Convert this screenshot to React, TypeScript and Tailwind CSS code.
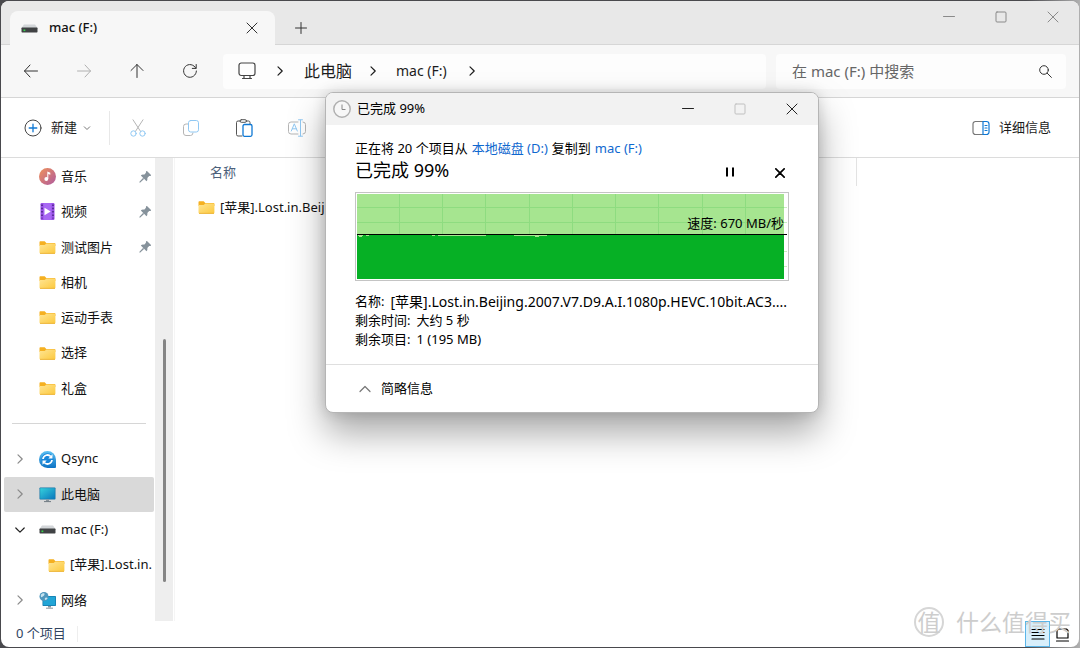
import { ReactNode } from "react";

const sidebarItems = [
  { name: "音乐", icon: "music", pinned: true },
  { name: "视频", icon: "video", pinned: true },
  { name: "测试图片", icon: "folder", pinned: true },
  { name: "相机", icon: "folder" },
  { name: "运动手表", icon: "folder" },
  { name: "选择", icon: "folder" },
  { name: "礼盒", icon: "folder" },
];

const treeItems = [
  { name: "Qsync", icon: "sync", chevron: "right" },
  { name: "此电脑", icon: "pc", chevron: "right", selected: true },
  { name: "mac (F:)", icon: "drive", chevron: "down" },
  { name: "[苹果].Lost.in.", icon: "folder", nested: true },
  { name: "网络", icon: "network", chevron: "right" },
];

type Item = {
  name: string;
  icon: string;
  pinned?: boolean;
  chevron?: string;
  selected?: boolean;
  nested?: boolean;
};

function Line({
  children,
  size = 16,
  box = 16,
  width = 1,
  className = "",
}: {
  children: ReactNode;
  size?: number;
  box?: number;
  width?: number;
  className?: string;
}) {
  return (
    <svg
      width={size}
      height={size}
      viewBox={`0 0 ${box} ${box}`}
      fill="none"
      stroke="currentColor"
      strokeWidth={width}
      strokeLinecap="round"
      strokeLinejoin="round"
      className={`shrink-0 ${className}`}
    >
      {children}
    </svg>
  );
}

function Chevron({ dir, className = "" }: { dir: string; className?: string }) {
  const paths: Record<string, string> = {
    right: "M4 1.8 8.2 6 4 10.2",
    down: "M1.8 4 6 8.2 10.2 4",
    up: "M1 8.5 6 3.5 11 8.5",
  };
  return (
    <Line size={12} box={12} width={1.2} className={className}>
      <path d={paths[dir]} />
    </Line>
  );
}

function Cross({ size = 12, width = 1 }: { size?: number; width?: number }) {
  return (
    <Line size={size} box={12} width={width}>
      <path d="M1 1l10 10M11 1L1 11" />
    </Line>
  );
}

function ItemIcon({ name }: { name: string }) {
  return (
    <svg width="17" height="17" viewBox="0 0 17 17" className="shrink-0">
      {name === "folder" && (
        <>
          <defs>
            <linearGradient id="folder" x1="0" y1="0" x2="1" y2="1">
              <stop offset="0" stopColor="#ffe594" />
              <stop offset="1" stopColor="#fcc93e" />
            </linearGradient>
          </defs>
          <path d="M.5 3.3c0-.6.4-1 1-1h4.2l1.6 1.6h8c.7 0 1.1.4 1.1 1V7H.5z" fill="#f5b021" />
          <path d="M.5 6h5.200l1.600-1.500h8.200c.6 0 .9.3.9.9v8.100c0 .6-.4.9-1 .9H1.500c-.6 0-1-.3-1-.9z" fill="url(#folder)" />
          <path d="M1 14.400h15" stroke="#e9a91f" strokeWidth=".8" />
        </>
      )}
      {name === "music" && (
        <>
          <defs>
            <linearGradient id="music" x1="0" y1="0" x2="1" y2="1">
              <stop offset="0" stopColor="#f0925a" />
              <stop offset="1" stopColor="#ae5a9f" />
            </linearGradient>
          </defs>
          <circle cx="8.500" cy="8.500" r="8.500" fill="url(#music)" />
          <circle cx="7.300" cy="11" r="1.900" fill="#fff" />
          <path d="M8.300 11V3.600l3 1.200v2l-2-.7V11z" fill="#fff" />
        </>
      )}
      {name === "video" && (
        <>
          <rect x="1.500" y="0" width="14" height="17" rx="1.200" fill="#9a50e8" />
          <rect x="4.500" y="0" width="8" height="17" fill="#a868f3" />
          <path d="M3 1.500v14M14 1.500v14" stroke="#42207c" strokeWidth="1.400" strokeDasharray="1.500 1.800" />
          <path d="M5.500 4.800v7.400l6.200-3.700z" fill="#fff" />
        </>
      )}
      {name === "sync" && (
        <>
          <defs>
            <linearGradient id="sync" x1="0" y1="0" x2="0" y2="1">
              <stop offset="0" stopColor="#5cc1f3" />
              <stop offset="1" stopColor="#0d73c4" />
            </linearGradient>
          </defs>
          <path d="M8.500 0a8.500 8.500 0 0 1 8.500 8.500V16a1 1 0 0 1-1 1H8.500a8.500 8.500 0 0 1 0-17z" fill="url(#sync)" />
          <circle cx="8.500" cy="8.300" r="6" fill="#1786da" />
          <path d="M4 8a4.500 4.500 0 0 1 7.800-2.500M13 9a4.500 4.500 0 0 1-7.800 2.500" fill="none" stroke="#fff" strokeWidth="1.800" />
          <path d="M13.500 3.300v4.200H9.300zM3.500 13.700V9.500h4.200z" fill="#fff" />
        </>
      )}
      {name === "pc" && (
        <>
          <defs>
            <linearGradient id="pc" x1="0" y1="0" x2="1" y2="1">
              <stop offset="0" stopColor="#35d0dc" />
              <stop offset="1" stopColor="#0a78bd" />
            </linearGradient>
          </defs>
          <rect x=".5" y="1.500" width="16" height="12" rx=".8" fill="#1477a8" />
          <rect x="1.200" y="2.200" width="14.600" height="10.600" fill="url(#pc)" />
          <path d="M7 13.500h3v1.800H7z" fill="#8b949b" />
          <path d="M5 15.600h7" stroke="#707a82" strokeWidth="1" />
        </>
      )}
      {name === "drive" && (
        <>
          <path d="M3 4.500h11l2.500 3.500H.5z" fill="#d3d6d9" />
          <rect x=".5" y="7.500" width="16" height="5" rx=".7" fill="#404244" />
          <rect x="2.500" y="9.500" width="1.800" height="1.600" fill="#35d64a" />
        </>
      )}
      {name === "network" && (
        <>
          <rect x="3.500" y="4" width="13.500" height="10" rx=".8" fill="#1477a8" />
          <rect x="4.200" y="4.700" width="12.100" height="8.600" fill="#22a5d6" />
          <path d="M9 14h3v1.500H9z" fill="#8b949b" />
          <path d="M7 16.200h7" stroke="#8b949b" />
          <circle cx="5" cy="4.500" r="4.500" fill="#4f97bd" />
          <path d="M2 2.500c2-2 4-1.500 3.500 0S4 4 3 5 1.500 4 2 2.500M6 6c1-1 2-.5 2.500 0S7 8 6.500 8 5.500 7 6 6" fill="#c5e3ef" />
        </>
      )}
    </svg>
  );
}

function Pin() {
  return (
    <svg width="12" height="12" viewBox="0 0 12 12" className="ml-auto mr-[3px] shrink-0" fill="#86929b">
      <path d="M7.300.2c.3-.3.6-.3.900 0l3.600 3.600c.3.3.3.6 0 .9-.5.5-1.100.5-1.600.3L8.300 6.900c.3 1.300.1 2.400-.8 3.300L4.800 7.500.900 11.400.3 11.700l.3-.6 3.900-3.900-2.700-2.700c.9-.9 2-1.100 3.300-.8L7 1.800C6.800 1.300 6.800.7 7.300.2z" />
      <path d="M4 7l1 1-3.800 3.500-.7-.7z" />
    </svg>
  );
}

function SidebarRow({ item }: { item: Item }) {
  return (
    <li className="flex min-h-[35px] flex-1">
      <button
        type="button"
        className={`flex w-full items-center whitespace-nowrap rounded-xs pl-[10px] text-left ${
          item.selected ? "bg-[#d9d9d9]" : ""
        }`}
      >
        <span className="w-3 shrink-0">
          {item.chevron && (
            <Chevron
              dir={item.chevron}
              className={item.chevron === "down" ? "text-[#222]" : "text-[#8a8a8a]"}
            />
          )}
        </span>
        <span className={`mr-[5px] shrink-0 ${item.nested ? "ml-[22px]" : "ml-[13px]"}`}>
          <ItemIcon name={item.icon} />
        </span>
        <span>{item.name}</span>
        {item.pinned && <Pin />}
      </button>
    </li>
  );
}

function TitleBar() {
  return (
    <header className="flex h-11 shrink-0 items-stretch border-b border-[#d6d6d6] bg-[#e8e8e8]">
      <div className="-mb-px ml-[9px] mt-[10px] flex w-[265px] items-center rounded-t-lg bg-[#f7f7f7] pl-[11px] pr-[17px]">
        <ItemIcon name="drive" />
        <span className="ml-[11px] flex-1 font-medium">mac (F:)</span>
        <button type="button" aria-label="关闭标签页" className="text-[#333]">
          <Cross />
        </button>
      </div>
      <button type="button" aria-label="新建标签页" className="ml-5 mt-[10px] text-[#333]">
        <Line size={12} box={12}>
          <path d="M6 .5v11M.5 6h11" />
        </Line>
      </button>
      <div className="ml-auto flex h-8 text-[#8a8a8a]">
        <button type="button" aria-label="最小化" className="flex w-[52px] items-center justify-center">
          <Line size={12} box={12}>
            <path d="M.5 5.500h11" />
          </Line>
        </button>
        <button type="button" aria-label="最大化" className="flex w-[52px] items-center justify-center">
          <Line size={12} box={12}>
            <rect x="1" y="1" width="10" height="10" rx="1" />
          </Line>
        </button>
        <button type="button" aria-label="关闭" className="flex w-[52px] items-center justify-center">
          <Cross />
        </button>
      </div>
    </header>
  );
}

function NavBar() {
  const navButton = "flex w-[53px] items-center justify-center";
  return (
    <nav className="flex h-[53px] shrink-0 items-center border-b border-[#d6d6d6] bg-[#f7f7f7] pl-[3px] pr-[13px] text-[#333]">
      <button type="button" aria-label="后退" className={navButton}>
        <Line>
          <path d="M7 2L1.500 8 7 14M1.500 8h13" />
        </Line>
      </button>
      <button type="button" aria-label="前进" disabled className={`${navButton} text-[#b0b0b0]`}>
        <Line>
          <path d="M9 2l5.500 6L9 14M14.500 8h-13" />
        </Line>
      </button>
      <button type="button" aria-label="向上" className={navButton}>
        <Line>
          <path d="M2 7.500L8 1.500l6 6M8 1.500v13" />
        </Line>
      </button>
      <button type="button" aria-label="刷新" className={navButton}>
        <Line>
          <path d="M13.800 5.200A6.400 6.400 0 1 0 14.400 8M14.200 1.500v3.900h-3.900" />
        </Line>
      </button>
      <div className="ml-[7px] flex h-[35px] flex-1 items-center rounded-sm bg-[#fdfdfd] pl-[15px] text-base whitespace-nowrap text-[#1c1c1c]">
        <Line size={18} box={18} width={1.2} className="text-[#444]">
          <rect x="1" y="1" width="16" height="12.500" rx="2.200" />
          <path d="M6 13.500v2.500M12 13.500v2.500M4.500 16.500h9" />
        </Line>
        <Chevron dir="right" className="ml-[18px]" />
        <button type="button" className="ml-[18px]">
          此电脑
        </button>
        <Chevron dir="right" className="ml-[15px]" />
        <button type="button" className="ml-[17px] text-sm">
          mac (F:)
        </button>
        <Chevron dir="right" className="ml-[19px]" />
      </div>
      <label className="ml-[10px] flex h-[35px] w-[290px] items-center rounded-sm bg-[#fdfdfd] pl-4 pr-[14px]">
        <input
          type="text"
          aria-label="在 mac (F:) 中搜索"
          placeholder="在 mac (F:) 中搜索"
          className="min-w-0 flex-1 bg-transparent text-[15px] outline-none placeholder:text-[#666]"
        />
        <Line size={13} box={13}>
          <circle cx="5" cy="5" r="4.300" />
          <path d="M8.200 8.200l4.200 4.200" />
        </Line>
      </label>
    </nav>
  );
}

function CommandBar() {
  const toolButton = "flex w-[53px] items-center justify-center";
  return (
    <div className="flex h-[60px] shrink-0 items-center border-b border-[#dcdcdc] bg-white pl-[23px] pr-7 text-[#1c1c1c]">
      <button type="button" className="flex items-center">
        <Line size={18} box={18} className="text-[#444]">
          <circle cx="9" cy="9" r="8" />
          <path d="M9 5.200v7.600M5.200 9h7.600" stroke="#0f78d4" strokeWidth="1.300" />
        </Line>
        <span className="ml-[9px]">新建</span>
        <svg width="8" height="8" viewBox="0 0 8 8" fill="none" stroke="#777" className="ml-[6px]">
          <path d="M1 2.500l3 3 3-3" />
        </svg>
      </button>
      <div className="ml-[18px] h-[34px] w-px bg-[#e8e8e8]" />
      <button type="button" aria-label="剪切" disabled className={`${toolButton} ml-px`}>
        <Line size={18} box={18} className="text-[#b5b5b5]">
          <path d="M4 .8l7.500 11.500M14 .8L6.500 12.300" />
          <circle cx="4.500" cy="14.500" r="2.700" stroke="#90c8f3" />
          <circle cx="13.500" cy="14.500" r="2.700" stroke="#90c8f3" />
        </Line>
      </button>
      <button type="button" aria-label="复制" disabled className={toolButton}>
        <Line size={18} box={18} className="text-[#b5b5b5]">
          <path d="M6 5H4a2.500 2.500 0 0 0-2.500 2.500v6.500A2.500 2.500 0 0 0 4 16.500h4.500A2.500 2.500 0 0 0 11 14" />
          <rect x="6.500" y="1.500" width="10" height="11.500" rx="2.200" stroke="#90c8f3" />
        </Line>
      </button>
      <button type="button" aria-label="粘贴" className={toolButton}>
        <Line size={18} box={18} className="text-[#555]">
          <path d="M5.500 2H3a1.500 1.500 0 0 0-1.500 1.500v12A1.500 1.500 0 0 0 3 17h4M11 2h2.500A1.500 1.500 0 0 1 15 3.500V5" />
          <rect x="5" y=".7" width="6.500" height="2.600" rx="1.300" />
          <rect x="8" y="5.500" width="9" height="11.800" rx="1.500" stroke="#0f78d4" strokeWidth="1.300" />
        </Line>
      </button>
      <button type="button" aria-label="重命名" disabled className={toolButton}>
        <Line size={18} box={18} className="text-[#b5b5b5]">
          <path d="M10 3H3A2.500 2.500 0 0 0 .5 5.500v7A2.500 2.500 0 0 0 3 15h7M15 3a2.500 2.500 0 0 1 2.500 2.500v7A2.500 2.500 0 0 1 15 15" />
          <path d="M12.500 1v16M10.500 .8h4M10.500 17.200h4M3.300 12l3-7.200 3 7.200M4.400 9.800h3.900" stroke="#90c8f3" />
        </Line>
      </button>
      <button type="button" className="ml-auto flex items-center">
        <Line size={18} box={18} width={1.2} className="text-[#777]">
          <path d="M11 2.500H3.500A2.500 2.500 0 0 0 1 5v8a2.500 2.500 0 0 0 2.500 2.500H11" />
          <path d="M11 2.500h3.500A2.500 2.500 0 0 1 17 5v8a2.500 2.500 0 0 1-2.500 2.500H11zM13 6.500h2M13 9h2M13 11.500h2" stroke="#0f78d4" />
        </Line>
        <span className="ml-[9px]">详细信息</span>
      </button>
    </div>
  );
}

function Sidebar() {
  return (
    <aside className="flex w-[173px] shrink-0">
      <div className="flex w-[153px] flex-col pb-[3px] pl-[3px] pt-px">
        <ul className="flex flex-[7] flex-col">
          {sidebarItems.map((item) => (
            <SidebarRow key={item.name} item={item} />
          ))}
        </ul>
        <div className="flex min-h-[35px] flex-1 items-center pl-2 pr-2">
          <hr className="w-full border-[#d6d6d6]" />
        </div>
        <ul className="flex flex-[5] flex-col">
          {treeItems.map((item) => (
            <SidebarRow key={item.name} item={item} />
          ))}
        </ul>
      </div>
      <div className="ml-px flex w-[18px] flex-col items-center bg-[#eeeeee]">
        <div className="flex-[181]" />
        <div className="w-[3px] flex-[243] rounded-full bg-[#858585]" />
        <div className="flex-[39]" />
      </div>
    </aside>
  );
}

function SpeedChart() {
  const columns = [43, 86, 129, 173, 216, 259, 302, 346, 389];
  const rows = [14, 29, 58, 73];
  return (
    <div className="relative mt-[10px] h-[89px] border border-[#c4c4c4] bg-white">
      <svg
        width="100%"
        height="100%"
        viewBox="0 0 432 87"
        preserveAspectRatio="none"
        shapeRendering="crispEdges"
        className="block"
      >
        {rows.map((y) => (
          <rect key={y} x="428" y={y} width="3" height="1" fill="#c9efc0" />
        ))}
        <rect x="1" y="1" width="427" height="85" fill="#a6e590" />
        {columns.map((x) => (
          <rect key={x} x={x} y="1" width="1" height="41" fill="#8edc80" />
        ))}
        <rect x="1" y="14" width="427" height="1" fill="#8edc80" />
        <rect x="1" y="29" width="427" height="1" fill="#8edc80" />
        <rect x="1" y="41" width="427" height="45" fill="#06b025" />
        <path d="M2 42.500h5M10 42.500h3M76 42.500h3M82 42.500h48M158 42.500h33" stroke="#a6e590" />
        <path d="M3 43.500h3M179 43.500h4" stroke="#a6e590" />
        <rect x="1" y="41" width="430" height="1" fill="#000" />
      </svg>
      <span className="absolute right-1 top-5 leading-5">速度: 670 MB/秒</span>
    </div>
  );
}

function CopyDialog() {
  return (
    <section
      role="dialog"
      aria-label="已完成 99%"
      className="absolute left-[325px] top-[92px] w-[494px] overflow-hidden rounded-lg border border-[#b5b5b5] bg-white text-black shadow-[0_20px_36px_rgba(0,0,0,0.34),0_0_14px_rgba(0,0,0,0.14)]"
    >
      <div className="flex h-8 items-center bg-[#f2f2f2] pl-[7px]">
        <svg width="18" height="18" viewBox="0 0 18 18" fill="none" stroke="#b0b0b0">
          <circle cx="9" cy="9" r="8.200" fill="#f7f7f7" strokeWidth="1.500" />
          <path d="M9 4.500V9.500h3.500" stroke="#888" />
        </svg>
        <span className="ml-[6px]">已完成 99%</span>
        <div className="ml-auto flex text-[#222]">
          <button type="button" aria-label="最小化" className="flex w-[52px] items-center justify-center">
            <Line size={12} box={12}>
              <path d="M.5 5.500h11" />
            </Line>
          </button>
          <button
            type="button"
            aria-label="最大化"
            disabled
            className="flex w-[52px] items-center justify-center text-[#c0c0c0]"
          >
            <Line size={12} box={12}>
              <rect x="1" y="1" width="10" height="10" rx="1" />
            </Line>
          </button>
          <button type="button" aria-label="关闭" className="flex w-[52px] items-center justify-center">
            <Cross />
          </button>
        </div>
      </div>

      <div className="px-[29px] pt-[13px]">
        <p className="flex gap-1 leading-5">
          正在将 20 个项目从
          <a href="#d" className="text-[#0f68cf]">
            本地磁盘 (D:)
          </a>
          复制到
          <a href="#f" className="text-[#0f68cf]">
            mac (F:)
          </a>
        </p>
        <div className="flex h-6 items-center pr-[4px]">
          <h1 className="text-lg leading-6">已完成 99%</h1>
          <button type="button" aria-label="暂停" className="ml-auto mt-1 p-1">
            <Line size={12} box={12} width={2} className="[stroke-linecap:butt]">
              <path d="M3 1.500v9M9 1.500v9" />
            </Line>
          </button>
          <button type="button" aria-label="取消" className="ml-[35px] mt-[5px]">
            <Cross size={10} width={2} />
          </button>
        </div>
        <SpeedChart />
        <div className="mt-[11px] leading-[19px]">
          <p className="flex gap-[6px] whitespace-nowrap">
            名称:
            <span className="text-sm leading-[19px]">
              [苹果].Lost.in.Beijing.2007.V7.D9.A.I.1080p.HEVC.10bit.AC3....
            </span>
          </p>
          <p className="flex gap-[6px]">
            剩余时间:
            <span>大约 5 秒</span>
          </p>
          <p className="flex gap-[6px]">
            剩余项目:
            <span>1 (195 MB)</span>
          </p>
        </div>
      </div>

      <div className="mt-[15px] flex h-12 items-center border-t border-[#dfdfdf] pl-[33px]">
        <button type="button" className="flex items-center">
          <Chevron dir="up" className="text-[#777]" />
          <span className="ml-[10px]">简略信息</span>
        </button>
      </div>
    </section>
  );
}

function Watermark() {
  return (
    <div className="pointer-events-none absolute bottom-[8px] right-[9px] flex items-center text-[23px] leading-9 text-[#cdcdcd]">
      <span className="mr-3 flex size-[30px] items-center justify-center rounded-full border-2 border-[#d6d6d6]">
        值
      </span>
      什么值得买
    </div>
  );
}

export default function App() {
  return (
    <div className="relative flex min-h-screen flex-col bg-linear-to-r from-[#49494d] from-95% to-[#b0b0b0] p-px font-['Noto_Sans','Noto_Sans_CJK_SC',sans-serif] text-[13px] text-[#111]">
      <div className="flex flex-1 flex-col overflow-hidden rounded-lg bg-white">
        <TitleBar />
        <NavBar />
        <CommandBar />
        <div className="flex flex-1">
          <Sidebar />
          <main className="flex-1 border-l border-[#f5f5f5]">
            <div className="flex h-7 items-center text-[#4c607a]">
              <span className="h-full w-[682px] border-r border-[#e3e3e3] pl-[35px] leading-7">名称</span>
            </div>
            <div className="mt-1 flex h-[35px] items-center whitespace-nowrap pl-[23px]">
              <ItemIcon name="folder" />
              <span className="ml-[5px]">[苹果].Lost.in.Beijing.2007</span>
            </div>
          </main>
        </div>
        <footer className="flex h-[26px] shrink-0 items-center pl-[15px] text-[#30445f]">
          <span>0 个项目</span>
          <div className="ml-[11px] h-4 w-px bg-[#eeeeee]" />
          <div className="ml-auto flex h-full items-center pr-[9px] text-black">
            <button
              type="button"
              aria-label="详细信息视图"
              className="flex h-full w-[25px] items-center justify-center border border-[#5bb5e8] bg-[#d8effb]"
            >
              <Line size={14} box={14} width={1.2}>
                <path d="M1 2.500h12M1 5.500h12M1 8.500h12M1 12h12" />
              </Line>
            </button>
            <button type="button" aria-label="大图标视图" className="ml-[5px]">
              <Line size={15} box={15} width={1.2}>
                <path d="M2 3.500l1.500-1.500h8L13 3.500V11H2zM1.500 14h12" />
              </Line>
            </button>
          </div>
        </footer>
      </div>
      <CopyDialog />
      <Watermark />
    </div>
  );
}
